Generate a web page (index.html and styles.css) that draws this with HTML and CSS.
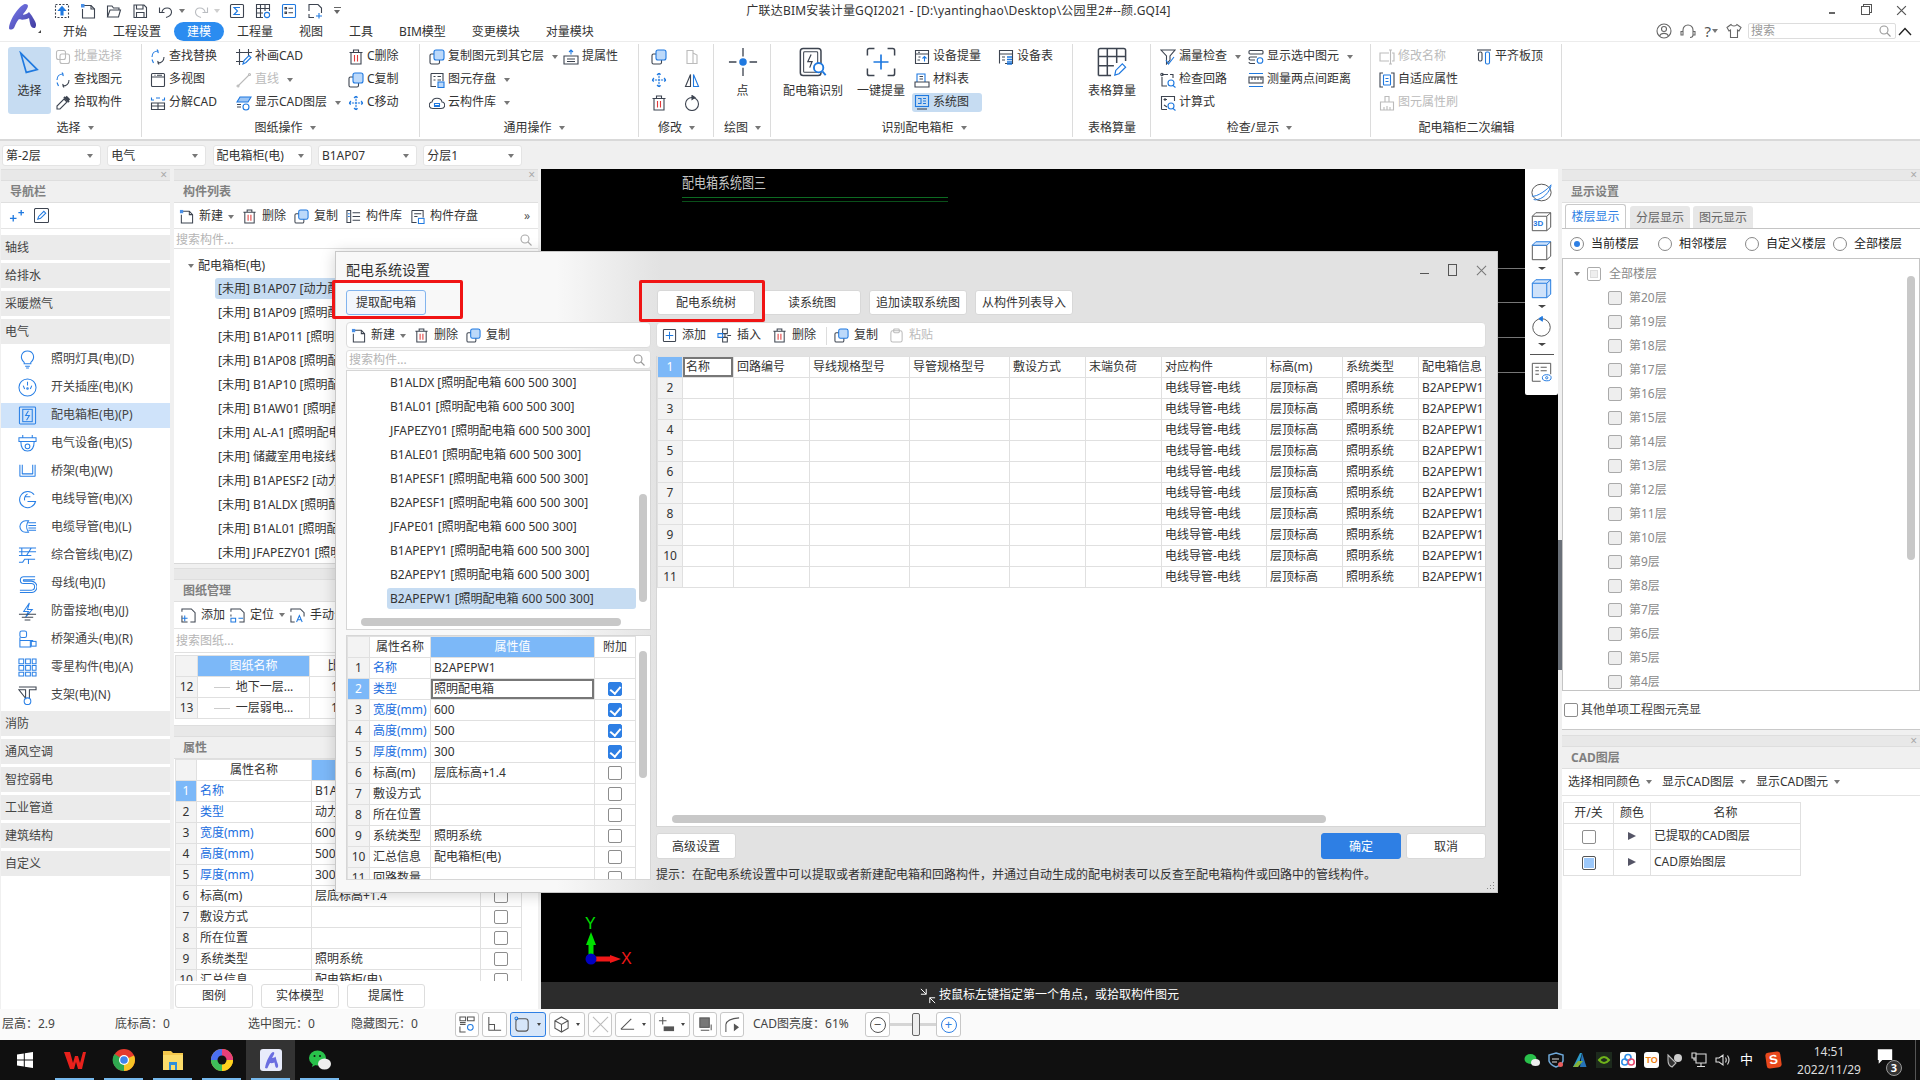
FILE: index.html
```html
<!DOCTYPE html>
<html lang="zh-CN">
<head>
<meta charset="utf-8">
<title>广联达BIM安装计量GQI2021</title>
<link rel="stylesheet" href="styles.css">
</head>
<body>
<svg class="defs" xmlns="http://www.w3.org/2000/svg">
<defs>
<linearGradient id="lg" x1="0" y1="0" x2="1" y2="1"><stop offset="0" stop-color="#7a7ef0"/><stop offset="1" stop-color="#3f3a9e"/></linearGradient>
<symbol id="q-up" viewBox="0 0 16 16"><rect x="1.5" y="1.5" width="13" height="13" stroke-dasharray="2 1.5"/><path d="M8 3.5 4.5 7.5H7V12H9V7.5H11.5Z" fill="#1f79e0" stroke="#1f79e0"/></symbol>
<symbol id="q-new" viewBox="0 0 16 16"><path d="M3 2.5H11L14.5 6V15H2.5V6"/><path d="M11 2.5V6H14.5"/><rect x="1" y="1" width="3.5" height="3.5" fill="#4a90e8" stroke="none"/></symbol>
<symbol id="q-open" viewBox="0 0 16 16"><path d="M1.5 14V3H6L7.5 5H13V7M1.5 14H12.5L14.5 7H4Z"/></symbol>
<symbol id="q-save" viewBox="0 0 16 16"><path d="M2 2H12L14.5 4.5V14.5H2Z"/><path d="M4.5 2V6H11V2M4.5 14.5V9.5H12V14.5"/></symbol>
<symbol id="q-undo" viewBox="0 0 16 16"><path d="M4 9C5 3.5 14 3.5 13.5 9.5C13 13 10 14 8 14.5"/><path d="M1.5 4.5V9.5H6.5"/></symbol>
<symbol id="q-redo" viewBox="0 0 16 16"><path d="M12 9C11 3.5 2 3.5 2.5 9.5C3 13 6 14 8 14.5"/><path d="M14.5 4.5V9.5H9.5"/></symbol>
<symbol id="q-sum" viewBox="0 0 16 16"><rect x="1.5" y="1.5" width="13" height="13" rx="1"/><path d="M11 4.5H5L8.5 8L5 11.5H11" stroke="#1f79e0"/></symbol>
<symbol id="q-tbl" viewBox="0 0 16 16"><path d="M8 14.5H1.5V1.5H14.5V8M1.5 5.5H14.5M1.5 10H8M5.5 1.5V14.5M10 1.5V8"/><circle cx="12" cy="12" r="2.6" stroke="#1f79e0"/></symbol>
<symbol id="q-list" viewBox="0 0 16 16"><rect x="1.5" y="1.5" width="13" height="13" rx="1" stroke="#1f79e0"/><path d="M4 4.5H5.5V6H4ZM4 9H5.5V10.5H4ZM7.5 5.2H12M7.5 9.7H12"/></symbol>
<symbol id="q-plus" viewBox="0 0 16 16"><path d="M2 8V1.5H11L14.5 5V10M2 11V14.5H7"/><path d="M9 13H15M12 10V15.5" stroke="#1f79e0"/></symbol>
<symbol id="nv-plus" viewBox="0 0 16 16" stroke="#1f79e0"><path d="M1 11H8M4.5 7.500V14.500M10 5H16M13 2V8" stroke-width="1.400"/></symbol>
<symbol id="nv-edit" viewBox="0 0 16 16"><rect x=".5" y=".5" width="15" height="15" rx="1.500"/><path d="M4 12 5 9 10.500 3.500 12.500 5.500 7 11Z" stroke="#1f79e0"/></symbol>
<symbol id="r-arrow" viewBox="0 0 24 32"><path d="M3 2 21 20 9 23Z" stroke="#1f79e0" stroke-width="1.8"/></symbol>
<symbol id="r-batch" viewBox="0 0 16 16"><rect x="1.5" y="1.5" width="9" height="9" rx="2"/><rect x="5" y="5" width="9.5" height="9.5" rx="2"/></symbol>
<symbol id="r-replace" viewBox="0 0 16 16"><path d="M2 8C2 4.5 4.5 2 8 2L7 .5M7 2 8.5 4" stroke="#1f79e0"/><path d="M14 8C14 11.5 11.5 14 8 14L9 15.5M9 14 7.5 12"/><path d="M2 10.5 3.5 14" stroke="#1f79e0"/></symbol>
<symbol id="r-drop" viewBox="0 0 16 16"><path d="M9 4 12 7 5 14H2V11Z"/><path d="M9 2 14 7M11 1.5 14.5 5" stroke-width="2"/></symbol>
<symbol id="r-patch" viewBox="0 0 16 16"><path d="M3.5 0V16M0 3.5H16M12.5 0V7M0 12.5H7"/><path d="M7 15 8 11.5 13 6.5 15 8.5 10 13.5Z" stroke="#1f79e0"/></symbol>
<symbol id="r-views" viewBox="0 0 16 16"><rect x="1.5" y="1.5" width="13" height="13" rx="1"/><path d="M1.5 5H14.5M4.5 3.2H5.5M7 3.2H12"/></symbol>
<symbol id="r-line" viewBox="0 0 16 16"><path d="M2 14 13 3"/><circle cx="13.5" cy="2.5" r="1"/><circle cx="2" cy="14" r="1"/></symbol>
<symbol id="r-layer" viewBox="0 0 16 16"><path d="M1 9.5H5M1 12H5"/><path d="M4 2 15 2 12 7H1Z" fill="#9cc5f5" stroke="#1f79e0"/><circle cx="10" cy="12" r="3" stroke="#1f79e0"/></symbol>
<symbol id="r-expl" viewBox="0 0 16 16"><path d="M1.5 8H14.5V14.5H1.5ZM8 8V14.5M1.5 11H14.5"/><path d="M4 5H1.5V2.5M12 5H14.5V2.5M6 3H10" stroke="#1f79e0"/></symbol>
<symbol id="r-del" viewBox="0 0 16 16"><path d="M3 3.5V15H13V3.5M1.5 3.5H14.5M5.5 3.5V1H10.5V3.5"/><path d="M6.5 6V12.5M9.5 6V12.5" stroke="#e23a3a"/></symbol>
<symbol id="r-copy" viewBox="0 0 16 16"><rect x="1" y="5" width="9.5" height="10" rx="1.5"/><rect x="5" y="1" width="10" height="10" rx="2" fill="#bcd9fa" stroke="#1f79e0"/></symbol>
<symbol id="r-move" viewBox="0 0 16 16" stroke="#1f79e0"><path d="M8 1V15M1 8H15M6 3 8 1 10 3M6 13 8 15 10 13M3 6 1 8 3 10M13 6 15 8 13 10" stroke-dasharray="2.2 .8"/></symbol>
<symbol id="r-prop" viewBox="0 0 16 16"><path d="M1 7H15V15H1ZM4 10H12M4 12.5H12"/><path d="M8 5.5V1M6 3 8 1 10 3" stroke="#1f79e0"/></symbol>
<symbol id="r-esave" viewBox="0 0 16 16"><path d="M2 1.5H14V9M7 14.5H2V1.5"/><path d="M4.5 4.5H6.5M8.5 4.5H12M4.5 8H6.5M8.5 8H12"/><rect x="9" y="10" width="6" height="5.5" fill="#bcd9fa" stroke="#1f79e0"/></symbol>
<symbol id="r-cloud" viewBox="0 0 16 16"><path d="M4 13.5C-1 13.5-.5 7 3 7C4 2 12 2 13 7C16.5 7 17 13.5 12 13.5Z"/><path d="M6 10.5H10M5.5 8.5H10.5V11.5H5.5Z" stroke="#1f79e0"/></symbol>
<symbol id="r-flip" viewBox="0 0 16 16"><path d="M3 1.5H9V14.5H3ZM9 4 13 6V14.5H9"/></symbol>
<symbol id="r-tri" viewBox="0 0 16 16"><path d="M6.5 2.5V14.5H1.5Z"/><path d="M9.5 2.5V14.5H14.5Z" stroke="#1f79e0"/></symbol>
<symbol id="r-rot" viewBox="0 0 16 16"><circle cx="8" cy="9" r="6.5"/><path d="M8 .5V4.5L11 2.5Z" fill="#3d4450"/></symbol>
<symbol id="b-pt" viewBox="0 0 32 32"><path d="M16 1V10M16 22V31M1 16H9M23 16H31" stroke-width="1.4"/><circle cx="16" cy="16" r="4" fill="#1f79e0" stroke="none"/></symbol>
<symbol id="b-box" viewBox="0 0 30 32"><rect x="1.5" y="1.5" width="22" height="29" rx="3" stroke-width="1.6"/><rect x="5" y="5" width="15" height="22" rx="1"/><path d="M13 8 9.5 15.5H14L11.5 22" stroke-width="1.3"/><circle cx="21" cy="22" r="5" fill="#fff" stroke="#1f79e0" stroke-width="2"/><path d="M25 26 28.5 30" stroke="#1f79e0" stroke-width="2"/></symbol>
<symbol id="b-plus" viewBox="0 0 32 32"><path d="M1.5 9V3.5Q1.5 1.5 3.5 1.5H9M23 1.5H28.5Q30.500 1.500 30.500 3.500V9M30.500 23V28.500Q30.500 30.500 28.500 30.500H23M9 30.500H3.500Q1.500 30.500 1.500 28.500V23" stroke-width="1.6"/><path d="M16 8V24M8 16H24" stroke="#1f79e0" stroke-width="1.8"/></symbol>
<symbol id="b-grid" viewBox="0 0 32 32"><path d="M1.500 30.500V3.500Q1.500 1.500 3.500 1.500H28.500Q30.500 1.500 30.500 3.500V15M1.500 10H30.500M1.500 20H18M11 1.500V30.500M21 1.500V17M1.500 30.500H15" stroke-width="1.6"/><path d="M19 30 20 25 27 18 30.500 21.500 23.500 28.500Z" stroke="#1f79e0" stroke-width="1.3"/></symbol>
<symbol id="r-dev" viewBox="0 0 16 16"><path d="M1.500 1.500H14.500V14.500H1.500ZM1.500 5H14.500M4 3.200H6M4.500 8H6.500M3.500 11H6"/><path d="M10.500 12.500V7.500M8.500 9.500 10.500 7.500 12.500 9.500" stroke="#1f79e0"/></symbol>
<symbol id="r-eq" viewBox="0 0 16 16"><path d="M1.500 14.500V1.500H14.500V14.500H7M1.500 5H14.500M4 8H7M4 11H7"/><path d="M9 8H14M9 10.500H14M9 13H14M9 15H14" stroke="#1f79e0" stroke-width="1.500"/></symbol>
<symbol id="r-book" viewBox="0 0 16 16"><path d="M3 10V2H11V10" stroke="#1f79e0"/><path d="M1 10H15V15H1ZM5.500 4.500H9M5.500 7H9"/></symbol>
<symbol id="r-sys" viewBox="0 0 16 16"><rect x="1.500" y=".5" width="13" height="11" stroke="#1f79e0"/><path d="M4 3.500H7V8.500H4M9 3.500H12M9 6H12M9 8.500H12" stroke="#1f79e0"/><path d="M3 14H13"/></symbol>
<symbol id="r-funnel" viewBox="0 0 16 16"><path d="M1 1H15L10 7V11L6.500 15V7Z"/><path d="M6 11 8.500 15 14 8" stroke="#1f79e0"/></symbol>
<symbol id="r-disp" viewBox="0 0 16 16"><rect x="1" y="1.500" width="14" height="3.500" rx="1"/><path d="M9 8H2.500Q1 8 1 9.500Q1 11 2.500 11H7M7 14.500H2.500Q1 14.500 1 13"/><circle cx="12" cy="11.500" r="2.800" stroke="#1f79e0"/></symbol>
<symbol id="r-loop" viewBox="0 0 16 16"><path d="M2 2.500H8M2 5V14H7M10 2.500H13V6"/><circle cx="2" cy="2.500" r="1.200"/><circle cx="11" cy="11" r="3" stroke="#1f79e0"/><path d="M13 13.500 15.500 15.500" stroke="#1f79e0"/></symbol>
<symbol id="r-rule" viewBox="0 0 16 16"><path d="M1 1.500H15M1 14.500H15" stroke="#1f79e0"/><rect x="1" y="5" width="14" height="6"/><path d="M4 5V8M7 5V8M10 5V8M13 5V8"/></symbol>
<symbol id="r-calc" viewBox="0 0 16 16"><path d="M1.500 14.500V1.500H14.500V6M1.500 14.500H7M3.500 4.500H7M5 3V6"/><path d="M4 10 7 12" /><circle cx="11" cy="11" r="3" stroke="#1f79e0"/><path d="M13 13.500 15.500 15.500" stroke="#1f79e0"/></symbol>
<symbol id="r-ren" viewBox="0 0 16 16"><path d="M10 1H13M10 15H13M11.500 1V15M10 4H1V12H10M13 4H15V12H13"/></symbol>
<symbol id="r-align" viewBox="0 0 16 16"><path d="M1 1H15"/><rect x="2.500" y="3" width="3.500" height="9" rx="1.500"/><rect x="9.500" y="3" width="4" height="12" rx="1.500" stroke="#1f79e0"/></symbol>
<symbol id="r-adapt" viewBox="0 0 16 16"><path d="M4 1H1V15H4M12 1H15V15H12"/><rect x="4.500" y="3" width="7" height="10" rx=".5" stroke="#1f79e0"/><path d="M6.500 6.500H9.500M6.500 9.500H9.500" stroke="#1f79e0"/></symbol>
<symbol id="r-brush" viewBox="0 0 16 16"><path d="M6 7V1.500H10V7M1.500 7H14.500V15H1.500ZM5 12V15M8 11V15M11 12V15"/></symbol>
<symbol id="n-bulb" viewBox="0 0 20 20"><path d="M6.500 13C1 8 4 1 10 1C16 1 19 8 13.500 13V14.500H6.500Z"/><path d="M7.500 17H12.500M8.500 19H11.500"/></symbol>
<symbol id="n-sock" viewBox="0 0 20 20"><circle cx="10" cy="10" r="9"/><path d="M10 4V8M5.500 8 7 11.500M14.500 8 13 11.500"/><circle cx="10" cy="11" r=".8"/></symbol>
<symbol id="n-box" viewBox="0 0 20 20"><rect x="1.500" y="1" width="17" height="18" rx="1"/><rect x="5" y="3.500" width="10" height="13"/><path d="M11 5 8 10H12L9 15"/></symbol>
<symbol id="n-dev" viewBox="0 0 20 20"><path d="M1 4H19V8H1ZM3 8C3 14 5 18 10 18C15 18 17 14 17 8M5 4V1M15 4V1"/><circle cx="10" cy="13" r="2.500"/></symbol>
<symbol id="n-tray" viewBox="0 0 20 20"><path d="M2 3V15H18V3M4.500 3V12.500H15.500V3" stroke-linejoin="bevel"/></symbol>
<symbol id="n-cond" viewBox="0 0 20 20"><path d="M17 5A8.500 8.500 0 1 0 18.500 12H10"/><path d="M13 7H7M10 4Q6 7 7 11"/></symbol>
<symbol id="n-cab" viewBox="0 0 20 20"><path d="M11 3H8A6 6 0 0 0 8 15H11Q7 9 11 3ZM11 5H19M11 8H19M11 10.500H19M11 13H19"/></symbol>
<symbol id="n-merge" viewBox="0 0 20 20"><path d="M1 2H19M1 6H19M1 10H14M4 2V10M14 2 9 10M1 17H5L7 14H18M11 14V19"/></symbol>
<symbol id="n-bus" viewBox="0 0 20 20"><path d="M18 3H6A3.500 3.500 0 0 0 6 10H14A3 3 0 0 1 14 17H2M18 6H6A1 1 0 0 0 6 7.500H14A5 5 0 0 1 14 19.500H2"/></symbol>
<symbol id="n-bolt" viewBox="0 0 20 20"><path d="M12 1 6 10H11L8 16 15 8H10Z"/><path d="M1 13H19M4 16H16M7 19H13" stroke="#3d4450"/></symbol>
<symbol id="n-conn" viewBox="0 0 20 20"><rect x="2" y="1" width="7" height="7" rx="2"/><path d="M2 8V18H14M2 11H16M13 11V18"/><rect x="14" y="12" width="5" height="5"/></symbol>
<symbol id="n-grid" viewBox="0 0 20 20"><path d="M1 1H6V6H1ZM8 1H13V6H8ZM15 1H19V6H15ZM1 8H6V13H1ZM8 8H13V13H8ZM15 8H19V13H15ZM1 15H6V19H1ZM8 15H13V19H8ZM15 15H19V19H15Z"/></symbol>
<symbol id="n-brk" viewBox="0 0 20 20"><path d="M1 1H19V4H12V13M8 13V4H1Z" stroke="#3d4450"/><circle cx="10" cy="16" r="3.500"/></symbol>
<symbol id="t-add" viewBox="0 0 16 16"><rect x="1.500" y="1.500" width="13" height="13" rx="1"/><path d="M8 4V12M4 8H12" stroke="#1f79e0"/></symbol>
<symbol id="t-ins" viewBox="0 0 16 16"><path d="M6 1H11V6H6ZM6 10H11V15H6ZM8.500 6V10M11 8H15" stroke="#3d4450"/><path d="M1 6H6V10H1Z" stroke="#1f79e0"/></symbol>
<symbol id="t-paste" viewBox="0 0 16 16"><rect x="2" y="3" width="12" height="12" rx="2"/><rect x="5" y="1" width="6" height="4" rx="1"/></symbol>
<symbol id="t-sheet" viewBox="0 0 16 16"><path d="M4 1H11L15 5V15H10M1 4V1H4M1 8V15H7"/><path d="M1 11H7M4 8V14" stroke="#1f79e0"/></symbol>
<symbol id="t-loc" viewBox="0 0 16 16"><path d="M4 1H11L15 5V15H10M1 4V1H4M1 7V9"/><path d="M1 11H6V15H1ZM9 11H14" stroke="#1f79e0"/></symbol>
<symbol id="t-man" viewBox="0 0 16 16"><path d="M4 1H11L15 5V9M1 4V1H4M1 8V15H5"/><path d="M7 15 10 8 13 15M8.500 12.500H11.500" stroke="#1f79e0"/></symbol>
<symbol id="t-lib" viewBox="0 0 16 16"><path d="M1 1.500H5V14.500H1ZM7 4H15M7 8H15M7 12H15"/><path d="M2 5H4M2 8H4" stroke="#1f79e0"/></symbol>
<symbol id="t-store" viewBox="0 0 16 16"><path d="M2 1.500H14V9M7 14.500H2V1.500M4.500 5H12M4.500 8H8"/><rect x="9" y="10" width="6" height="5.500" stroke="#1f79e0"/></symbol>
<symbol id="s-mag" viewBox="0 0 12 12"><circle cx="5" cy="5" r="4"/><path d="M8 8 11.500 11.500"/></symbol>
<symbol id="v-orb" viewBox="0 0 24 24"><ellipse cx="12" cy="12" rx="11" ry="9.500"/><path d="M1 16C6 18 20 8 23 3" stroke="#1f79e0"/><path d="M3 20C8 22 20 16 23 4" stroke="#1f79e0"/></symbol>
<symbol id="v-cube" viewBox="0 0 24 24"><path d="M1.500 6H18V22.500H1.500ZM1.500 6 5.500 2H22.500V18.500L18 22.500M18 6 22.500 2"/></symbol>
<symbol id="v-top" viewBox="0 0 24 24"><path d="M1.500 6H18V22.500H1.500Z"/><path d="M1.500 6 5.500 2H22.500L18 6Z" fill="#cfe2fa" stroke="#1f79e0"/><path d="M22.500 2V18.500L18 22.500"/></symbol>
<symbol id="v-rot" viewBox="0 0 24 24"><circle cx="12" cy="13" r="10"/><path d="M9 3 13 .5V6Z" fill="#1f79e0" stroke="#1f79e0"/></symbol>
<symbol id="v-eye" viewBox="0 0 24 24"><path d="M11 22H1.500V1.500H22.500V14M5 6H9M11 6H18M5 10H9M11 10H18M5 14H9"/><ellipse cx="18" cy="18" rx="5" ry="3.500" stroke="#1f79e0"/><circle cx="18" cy="18" r="1.300" stroke="#1f79e0"/></symbol>
<symbol id="c-find" viewBox="0 0 18 18"><path d="M1 1H7V5H1ZM1 7H7M1 9H7M9 1H16V5H9ZM1 11V17H7"/><circle cx="12" cy="12" r="3" stroke="#1f79e0"/></symbol>
<symbol id="c-corner" viewBox="0 0 18 18"><path d="M3 1V15H16M3 9H9V15"/></symbol>
<symbol id="c-round" viewBox="0 0 18 18"><rect x="2" y="3" width="13" height="13" rx="3"/><circle cx="2.500" cy="2.500" r="1.500" stroke="#1f79e0"/></symbol>
<symbol id="c-hex" viewBox="0 0 18 18"><path d="M9 1 16 5V13L9 17 2 13V5ZM2 5 9 9 16 5M9 9V17"/></symbol>
<symbol id="c-x" viewBox="0 0 18 18"><path d="M1 1 17 17M17 1 1 17"/></symbol>
<symbol id="c-ang" viewBox="0 0 18 18"><path d="M2 14 13 3M2 14H16"/></symbol>
<symbol id="c-pl" viewBox="0 0 18 18"><path d="M5 1V9M1 5H9"/><rect x="6" y="11" width="11" height="5" fill="#555" stroke="none"/></symbol>
<symbol id="c-dev" viewBox="0 0 18 18"><rect x="3" y="2" width="10" height="10" fill="#777"/><path d="M4 15H13M15 9V15"/></symbol>
<symbol id="c-arc" viewBox="0 0 18 18"><path d="M2 17V9Q3 3 16 2"/><path d="M11 9V15L15 12Z" fill="#555"/></symbol>
<symbol id="d-full" viewBox="0 0 18 18"><path d="M7 7 1 1M7 1V7H1M11 11 17 17M11 17V11H17"/></symbol>
</defs>
</svg>

<header class="top">
  <svg class="logo" viewBox="0 0 36 29"><path d="M1 24C2 14 12 1 17 0C22 0 20 4 16 9C13 12 18 11 21 8L24 12C26 16 30 20 27 24C22 25 22 18 21 14C18 16 12 16 11 15C8 18 7 22 6 24C4 26 1 26 1 24Z" fill="url(#lg)"/><path d="M33 26V29H30Z" fill="#444"/></svg>
  <div class="qa">
    <svg class="ic"><use href="#q-up"/></svg><svg class="ic"><use href="#q-new"/></svg><svg class="ic"><use href="#q-open"/></svg><svg class="ic"><use href="#q-save"/></svg>
    <span class="undo"><svg class="ic"><use href="#q-undo"/></svg><i class="dn"></i></span>
    <span class="undo dim"><svg class="ic"><use href="#q-redo"/></svg><i class="dn"></i></span>
    <svg class="ic"><use href="#q-sum"/></svg><svg class="ic"><use href="#q-tbl"/></svg><svg class="ic"><use href="#q-list"/></svg><svg class="ic"><use href="#q-plus"/></svg>
    <i class="qmore"></i>
  </div>
  <div class="apptitle">广联达BIM安装计量GQI2021 - [D:\yantinghao\Desktop\公园里2#--颜.GQI4]</div>
  <div class="winctl"><i class="w-min"></i><i class="w-rest"></i><svg class="w-x" viewBox="0 0 10 10"><path d="M1 1 9 9M9 1 1 9"/></svg></div>
  <nav class="tabs">
    <span>开始</span><span>工程设置</span><span class="on">建模</span><span>工程量</span><span>视图</span><span>工具</span><span>BIM模型</span><span>变更模块</span><span>对量模块</span>
  </nav>
  <div class="tools">
    <svg class="tool-ic" viewBox="0 0 16 16"><circle cx="8" cy="8" r="7"/><circle cx="8" cy="6" r="2.500"/><path d="M3.500 13C5 9.500 11 9.500 12.500 13"/></svg>
    <svg class="tool-ic" viewBox="0 0 16 16"><path d="M3 9V7A5 5 0 0 1 13 7V9M1 8.500H3V12H1ZM13 8.500H15V12H13ZM13 12Q13 14.500 10 14.500"/></svg>
    <span class="help">?<i class="dn"></i></span>
    <svg class="tool-ic shirt" viewBox="0 0 16 16"><path d="M5 1.500 1 4.500 3 8 4.500 7V14.500H11.500V7L13 8 15 4.500 11 1.500C10 3.500 6 3.500 5 1.500Z"/></svg>
    <div class="topsearch"><span>搜索</span><svg class="mag" viewBox="0 0 12 12"><use href="#s-mag"/></svg></div>
    <svg class="tool-up" viewBox="0 0 14 9"><path d="M1 8 7 1.500 13 8"/></svg>
  </div>
</header>

<section class="ribbon">
  <div class="grp g1">
    <div class="gb">
      <div class="sel-big"><svg class="sel-ar"><use href="#r-arrow"/></svg><span>选择</span></div>
      <div class="col">
        <div class="ri off"><svg class="ic"><use href="#r-batch"/></svg>批量选择</div>
        <div class="ri"><svg class="ic"><use href="#r-replace"/></svg>查找图元</div>
        <div class="ri"><svg class="ic"><use href="#r-drop"/></svg>拾取构件</div>
      </div>
    </div>
    <div class="gl">选择<i class="dn"></i></div>
  </div>
  <div class="grp g2">
    <div class="gb">
      <div class="col w86">
        <div class="ri"><svg class="ic"><use href="#r-replace"/></svg>查找替换</div>
        <div class="ri"><svg class="ic"><use href="#r-views"/></svg>多视图</div>
        <div class="ri"><svg class="ic"><use href="#r-expl"/></svg>分解CAD</div>
      </div>
      <div class="col w112">
        <div class="ri"><svg class="ic"><use href="#r-patch"/></svg>补画CAD</div>
        <div class="ri off"><svg class="ic"><use href="#r-line"/></svg>直线<i class="dn"></i></div>
        <div class="ri"><svg class="ic"><use href="#r-layer"/></svg>显示CAD图层<i class="dn"></i></div>
      </div>
      <div class="col">
        <div class="ri"><svg class="ic"><use href="#r-del"/></svg>C删除</div>
        <div class="ri"><svg class="ic"><use href="#r-copy"/></svg>C复制</div>
        <div class="ri"><svg class="ic"><use href="#r-move"/></svg>C移动</div>
      </div>
    </div>
    <div class="gl">图纸操作<i class="dn"></i></div>
  </div>
  <div class="grp g3">
    <div class="gb">
      <div class="col w134">
        <div class="ri"><svg class="ic"><use href="#r-copy"/></svg>复制图元到其它层<i class="dn"></i></div>
        <div class="ri"><svg class="ic"><use href="#r-esave"/></svg>图元存盘<i class="dn"></i></div>
        <div class="ri"><svg class="ic"><use href="#r-cloud"/></svg>云构件库<i class="dn"></i></div>
      </div>
      <div class="col"><div class="ri"><svg class="ic"><use href="#r-prop"/></svg>提属性</div></div>
    </div>
    <div class="gl">通用操作<i class="dn"></i></div>
  </div>
  <div class="grp g4">
    <div class="gb mini">
      <svg class="ic"><use href="#r-copy"/></svg><svg class="ic off"><use href="#r-flip"/></svg>
      <svg class="ic"><use href="#r-move"/></svg><svg class="ic"><use href="#r-tri"/></svg>
      <svg class="ic"><use href="#r-del"/></svg><svg class="ic"><use href="#r-rot"/></svg>
    </div>
    <div class="gl">修改<i class="dn"></i></div>
  </div>
  <div class="grp g5">
    <div class="gb"><div class="bigb wfull"><svg class="big"><use href="#b-pt"/></svg>点</div></div>
    <div class="gl">绘图<i class="dn"></i></div>
  </div>
  <div class="grp g6">
    <div class="gb">
      <div class="bigb w60"><svg class="big"><use href="#b-box"/></svg>配电箱识别</div>
      <div class="bigb w50"><svg class="big"><use href="#b-plus"/></svg>一键提量</div>
      <div class="col w84">
        <div class="ri"><svg class="ic"><use href="#r-dev"/></svg>设备提量</div>
        <div class="ri"><svg class="ic"><use href="#r-book"/></svg>材料表</div>
        <div class="ri act"><svg class="ic"><use href="#r-sys"/></svg>系统图</div>
      </div>
      <div class="col"><div class="ri"><svg class="ic"><use href="#r-eq"/></svg>设备表</div></div>
    </div>
    <div class="gl">识别配电箱柜<i class="dn"></i></div>
  </div>
  <div class="grp g7">
    <div class="gb"><div class="bigb wfull"><svg class="big"><use href="#b-grid"/></svg>表格算量</div></div>
    <div class="gl">表格算量</div>
  </div>
  <div class="grp g8">
    <div class="gb">
      <div class="col w88">
        <div class="ri"><svg class="ic"><use href="#r-funnel"/></svg>漏量检查<i class="dn"></i></div>
        <div class="ri"><svg class="ic"><use href="#r-loop"/></svg>检查回路</div>
        <div class="ri"><svg class="ic"><use href="#r-calc"/></svg>计算式</div>
      </div>
      <div class="col">
        <div class="ri"><svg class="ic"><use href="#r-disp"/></svg>显示选中图元<i class="dn"></i></div>
        <div class="ri"><svg class="ic"><use href="#r-rule"/></svg>测量两点间距离</div>
      </div>
    </div>
    <div class="gl">检查/显示<i class="dn"></i></div>
  </div>
  <div class="grp g9">
    <div class="gb">
      <div class="col w97">
        <div class="ri off"><svg class="ic"><use href="#r-ren"/></svg>修改名称</div>
        <div class="ri"><svg class="ic"><use href="#r-adapt"/></svg>自适应属性</div>
        <div class="ri off"><svg class="ic"><use href="#r-brush"/></svg>图元属性刷</div>
      </div>
      <div class="col"><div class="ri"><svg class="ic"><use href="#r-align"/></svg>平齐板顶</div></div>
    </div>
    <div class="gl">配电箱柜二次编辑</div>
  </div>
</section>

<section class="combos">
  <div class="combo">第-2层<i class="dn"></i></div>
  <div class="combo">电气<i class="dn"></i></div>
  <div class="combo">配电箱柜(电)<i class="dn"></i></div>
  <div class="combo">B1AP07<i class="dn"></i></div>
  <div class="combo">分层1<i class="dn"></i></div>
</section>

<main class="main">
  <aside class="nav panel">
    <div class="strip"><span class="px">×</span></div>
    <div class="phead">导航栏</div>
    <div class="tbar navbar"><svg class="ic"><use href="#nv-plus"/></svg><svg class="ic"><use href="#nv-edit"/></svg></div>
    <div class="navlist">
      <div class="cat">轴线</div><div class="cat">给排水</div><div class="cat">采暖燃气</div><div class="cat">电气</div>
      <div class="ni"><svg class="nic"><use href="#n-bulb"/></svg>照明灯具(电)(D)</div>
      <div class="ni"><svg class="nic"><use href="#n-sock"/></svg>开关插座(电)(K)</div>
      <div class="ni on"><svg class="nic"><use href="#n-box"/></svg>配电箱柜(电)(P)</div>
      <div class="ni"><svg class="nic"><use href="#n-dev"/></svg>电气设备(电)(S)</div>
      <div class="ni"><svg class="nic"><use href="#n-tray"/></svg>桥架(电)(W)</div>
      <div class="ni"><svg class="nic"><use href="#n-cond"/></svg>电线导管(电)(X)</div>
      <div class="ni"><svg class="nic"><use href="#n-cab"/></svg>电缆导管(电)(L)</div>
      <div class="ni"><svg class="nic"><use href="#n-merge"/></svg>综合管线(电)(Z)</div>
      <div class="ni"><svg class="nic"><use href="#n-bus"/></svg>母线(电)(I)</div>
      <div class="ni"><svg class="nic"><use href="#n-bolt"/></svg>防雷接地(电)(J)</div>
      <div class="ni"><svg class="nic"><use href="#n-conn"/></svg>桥架通头(电)(R)</div>
      <div class="ni"><svg class="nic"><use href="#n-grid"/></svg>零星构件(电)(A)</div>
      <div class="ni"><svg class="nic"><use href="#n-brk"/></svg>支架(电)(N)</div>
      <div class="cat">消防</div><div class="cat">通风空调</div><div class="cat">智控弱电</div><div class="cat">工业管道</div><div class="cat">建筑结构</div><div class="cat">自定义</div>
    </div>
  </aside>

  <section class="comp">
    <div class="panel compt">
      <div class="strip"><span class="px">×</span></div>
      <div class="phead">构件列表</div>
      <div class="tbar t1">
        <span class="tb"><svg class="ic"><use href="#q-new"/></svg>新建<i class="dn"></i></span>
        <span class="tb"><svg class="ic"><use href="#r-del"/></svg>删除</span>
        <span class="tb"><svg class="ic"><use href="#r-copy"/></svg>复制</span>
        <span class="tb"><svg class="ic"><use href="#t-lib"/></svg>构件库</span>
        <span class="tb"><svg class="ic"><use href="#t-store"/></svg>构件存盘</span>
        <span class="more">»</span>
      </div>
      <div class="search">搜索构件...<svg class="mag" viewBox="0 0 12 12"><use href="#s-mag"/></svg></div>
      <div class="tree">
        <div class="troot"><i class="dn"></i>配电箱柜(电)</div>
        <div class="tr on">[未用] B1AP07 [动力配电箱 600 500 300]</div>
        <div class="tr">[未用] B1AP09 [照明配电箱 600 500 300]</div>
        <div class="tr">[未用] B1AP011 [照明配电箱 600 500 300]</div>
        <div class="tr">[未用] B1AP08 [照明配电箱 600 500 300]</div>
        <div class="tr">[未用] B1AP10 [照明配电箱 600 500 300]</div>
        <div class="tr">[未用] B1AW01 [照明配电箱 600 500 300]</div>
        <div class="tr">[未用] AL-A1 [照明配电箱 600 500 300]</div>
        <div class="tr">[未用] 储藏室用电接线箱 [照明配电箱 600 500 300]</div>
        <div class="tr">[未用] B1APESF2 [动力配电箱 600 500 300]</div>
        <div class="tr">[未用] B1ALDX [照明配电箱 600 500 300]</div>
        <div class="tr">[未用] B1AL01 [照明配电箱 600 500 300]</div>
        <div class="tr">[未用] JFAPEZY01 [照明配电箱 600 500 300]</div>
      </div>
    </div>
    <div class="panel compm">
      <div class="strip"></div>
      <div class="phead">图纸管理</div>
      <div class="tbar t2">
        <span class="tb"><svg class="ic"><use href="#t-sheet"/></svg>添加</span>
        <span class="tb"><svg class="ic"><use href="#t-loc"/></svg>定位<i class="dn"></i></span>
        <span class="tb"><svg class="ic"><use href="#t-man"/></svg>手动分割</span>
      </div>
      <div class="search s2">搜索图纸...</div>
      <table class="grid gmgr">
        <colgroup><col class="c22"><col class="c112"><col class="c60"></colgroup>
        <tr><th></th><th class="hi">图纸名称</th><th class="ctr lbl">比例</th></tr>
        <tr><th>12</th><td class="ctr"><span class="dash"></span>地下一层...</td><td class="ctr">1:1</td></tr>
        <tr><th>13</th><td class="ctr"><span class="dash"></span>一层弱电...</td><td class="ctr">1:1</td></tr>
      </table>
    </div>
    <div class="panel compp">
      <div class="strip"></div>
      <div class="phead">属性</div>
      <div class="pwrap">
      <table class="grid gprop">
        <colgroup><col class="c21"><col class="c115"><col class="c169"><col class="c41"></colgroup>
        <tr><th></th><th class="ctr lbl">属性名称</th><th class="hi">属性值</th><th class="ctr lbl">附加</th></tr>
        <tr><th class="hi">1</th><td class="bl">名称</td><td>B1AP07</td><td></td></tr>
        <tr><th>2</th><td class="bl">类型</td><td>动力配电箱</td><td class="ctr"><i class="cb"></i></td></tr>
        <tr><th>3</th><td class="bl">宽度(mm)</td><td>600</td><td class="ctr"><i class="cb"></i></td></tr>
        <tr><th>4</th><td class="bl">高度(mm)</td><td>500</td><td class="ctr"><i class="cb"></i></td></tr>
        <tr><th>5</th><td class="bl">厚度(mm)</td><td>300</td><td class="ctr"><i class="cb"></i></td></tr>
        <tr><th>6</th><td>标高(m)</td><td>层底标高+1.4</td><td class="ctr"><i class="cb"></i></td></tr>
        <tr><th>7</th><td>敷设方式</td><td></td><td class="ctr"><i class="cb"></i></td></tr>
        <tr><th>8</th><td>所在位置</td><td></td><td class="ctr"><i class="cb"></i></td></tr>
        <tr><th>9</th><td>系统类型</td><td>照明系统</td><td class="ctr"><i class="cb"></i></td></tr>
        <tr><th>10</th><td>汇总信息</td><td>配电箱柜(电)</td><td class="ctr"><i class="cb"></i></td></tr>
      </table>
      </div>
      <div class="pbtns"><span class="btn">图例</span><span class="btn">实体模型</span><span class="btn">提属性</span></div>
    </div>
  </section>

  <section class="canvas">
    <div class="cad">
      <div class="cadtitle">配电箱系统图三</div>
      <i class="gline gl1"></i><i class="gline gl2"></i>
      <i class="hline h1"></i><i class="hline h2"></i><i class="hline h3"></i><i class="hline h4"></i>
      <svg class="axis" viewBox="0 0 50 50"><path d="M11 40V24" stroke="#00e000" stroke-width="5"/><path d="M6 26 11 13 16 26Z" fill="#00e000" stroke="none"/><path d="M11 40H32" stroke="#f01818" stroke-width="5"/><path d="M30 36 41 40 30 44Z" fill="#f01818" stroke="none"/><circle cx="11" cy="40" r="5.500" fill="#0000c0" stroke="none"/></svg>
      <span class="ax ay">Y</span><span class="ax axx">X</span>
      <div class="vbar">
        <svg class="vic"><use href="#v-orb"/></svg>
        <span class="v3d"><svg class="vic"><use href="#v-cube"/></svg><b>3D</b></span>
        <svg class="vic"><use href="#v-top"/></svg><i class="dn"></i>
        <svg class="vic blf"><use href="#v-cube"/></svg><i class="dn"></i>
        <svg class="vic"><use href="#v-rot"/></svg><i class="dn"></i>
        <span class="vsep"></span>
        <svg class="vic"><use href="#v-eye"/></svg>
      </div>
      <i class="grip"></i>
    </div>
    <div class="cmd"><svg class="cmdic"><use href="#d-full"/></svg>按鼠标左键指定第一个角点，或拾取构件图元</div>
  </section>

  <aside class="right">
    <div class="panel rtop">
      <div class="strip"><span class="px">×</span></div>
      <div class="phead">显示设置</div>
      <div class="rtabs"><span class="on">楼层显示</span><span>分层显示</span><span>图元显示</span></div>
      <div class="radios">
        <label class="rad w88b"><i class="rb on"></i>当前楼层</label>
        <label class="rad w87b"><i class="rb"></i>相邻楼层</label>
        <label class="rad w88b"><i class="rb"></i>自定义楼层</label>
        <label class="rad"><i class="rb"></i>全部楼层</label>
      </div>
      <div class="floors">
        <div class="fall"><i class="dn"></i><i class="fcb mid"></i>全部楼层</div>
        <div class="fr"><i class="fcb"></i>第20层</div><div class="fr"><i class="fcb"></i>第19层</div><div class="fr"><i class="fcb"></i>第18层</div><div class="fr"><i class="fcb"></i>第17层</div><div class="fr"><i class="fcb"></i>第16层</div><div class="fr"><i class="fcb"></i>第15层</div><div class="fr"><i class="fcb"></i>第14层</div><div class="fr"><i class="fcb"></i>第13层</div><div class="fr"><i class="fcb"></i>第12层</div><div class="fr"><i class="fcb"></i>第11层</div><div class="fr"><i class="fcb"></i>第10层</div><div class="fr"><i class="fcb"></i>第9层</div><div class="fr"><i class="fcb"></i>第8层</div><div class="fr"><i class="fcb"></i>第7层</div><div class="fr"><i class="fcb"></i>第6层</div><div class="fr"><i class="fcb"></i>第5层</div><div class="fr"><i class="fcb"></i>第4层</div>
        <i class="fscroll"></i>
      </div>
      <div class="others"><i class="cb"></i>其他单项工程图元亮显</div>
    </div>
    <div class="panel rbot">
      <div class="strip"><span class="px">×</span></div>
      <div class="phead">CAD图层</div>
      <div class="cadbar"><span>选择相同颜色<i class="dn"></i></span><span>显示CAD图层<i class="dn"></i></span><span>显示CAD图元<i class="dn"></i></span></div>
      <table class="grid gcad">
        <colgroup><col class="c50"><col class="c37"><col class="c150"></colgroup>
        <tr><td class="ctr">开/关</td><td class="ctr">颜色</td><td class="ctr">名称</td></tr>
        <tr class="tall"><td class="ctr"><i class="cb"></i></td><td class="ctr"><i class="play"></i></td><td>已提取的CAD图层</td></tr>
        <tr class="tall"><td class="ctr"><i class="cb fillb"></i></td><td class="ctr"><i class="play"></i></td><td>CAD原始图层</td></tr>
      </table>
    </div>
  </aside>
</main>

<footer class="status">
  <span class="st s1">层高：2.9</span><span class="st s2w">底标高：0</span><span class="st s3">选中图元：0</span><span class="st s4">隐藏图元：0</span>
  <span class="sb w24"><svg class="cic"><use href="#c-find"/></svg></span>
  <span class="sb w25"><svg class="cic"><use href="#c-corner"/></svg></span>
  <span class="sb w35 act"><svg class="cic"><use href="#c-round"/></svg><i class="dn"></i></span>
  <span class="sb w36"><svg class="cic"><use href="#c-hex"/></svg><i class="dn"></i></span>
  <span class="sb w24"><svg class="cic lt"><use href="#c-x"/></svg></span>
  <span class="sb w36"><svg class="cic"><use href="#c-ang"/></svg><i class="dn"></i></span>
  <span class="sb w35"><svg class="cic"><use href="#c-pl"/></svg><i class="dn"></i></span>
  <span class="sb w24"><svg class="cic"><use href="#c-dev"/></svg></span>
  <span class="sb w24"><svg class="cic"><use href="#c-arc"/></svg></span>
  <span class="lum">CAD图亮度：61%</span>
  <span class="sb w25 zm"><i class="circ">−</i></span>
  <span class="slider"><i></i></span>
  <span class="sb w25"><i class="circ blue">+</i></span>
</footer>

<footer class="taskbar">
  <span class="win"><svg class="winlogo" viewBox="0 0 16 16"><path d="M0 2.500 6.800 1.500V7.500H0ZM7.800 1.300 16 0V7.500H7.800ZM0 8.500H6.800V14.500L0 13.500ZM7.800 8.500H16V16L7.800 14.700Z" fill="#fff"/></svg></span>
  <span class="app"><svg class="appic" viewBox="0 0 24 24"><path d="M1 4H7L10 15 12 8H15L17 15 20 4H23L19 21H15L13 14 11 21H7Z" fill="#e8211c"/></svg></span>
  <span class="app"><svg class="appic" viewBox="0 0 24 24"><circle cx="12" cy="12" r="11" fill="#e53a2e"/><path d="M12 12 2.500 6A11 11 0 0 0 12 23Z" fill="#2fa84f"/><path d="M12 12V23A11 11 0 0 0 22 7.500Z" fill="#f6c325"/><circle cx="12" cy="12" r="5" fill="#fff"/><circle cx="12" cy="12" r="3.800" fill="#3f83ec"/></svg></span>
  <span class="app"><svg class="appic" viewBox="0 0 24 24"><path d="M2 3H10L12 5H22V22H2Z" fill="#f5c84c"/><path d="M2 7H22V22H2Z" fill="#fcdc6a"/><path d="M8 14H16V22H14V17H10V22H8Z" fill="#2f8fdc"/></svg></span>
  <span class="app"><svg class="appic" viewBox="0 0 24 24"><circle cx="12" cy="12" r="11" fill="#f4a623"/><path d="M12 12 12 1A11 11 0 0 1 23 12Z" fill="#e83f7a"/><path d="M12 12 23 12A11 11 0 0 1 12 23Z" fill="#ffd21f"/><path d="M12 12V23A11 11 0 0 1 1 12Z" fill="#3fbf5a"/><path d="M12 12H1A11 11 0 0 1 12 1Z" fill="#4a6ff0"/><circle cx="12" cy="12" r="4.500" fill="#111"/></svg></span>
  <span class="app active"><svg class="appic" viewBox="0 0 24 24"><rect x="1" y="1" width="22" height="22" rx="3" fill="#e8ecfb"/><path d="M6 20C7 13 12 4 14 4C17 4 14 8 13 10C15 10 16 9 16.500 8.500L18 14C19 16 20 19 18 20C16 20 16 16 15.500 14.500C13 15.500 11.500 15 11 15C9.500 17 9 20 8 20.500Z" fill="#6a6ee0"/></svg></span>
  <span class="app"><svg class="appic" viewBox="0 0 24 24"><ellipse cx="9.500" cy="10" rx="8.500" ry="7.500" fill="#29c14b"/><path d="M5 15 4 19 9 16Z" fill="#29c14b"/><ellipse cx="16.500" cy="16" rx="6.500" ry="5.500" fill="#eee"/><circle cx="6.500" cy="8" r="1" fill="#111"/><circle cx="12" cy="8" r="1" fill="#111"/></svg></span>
  <div class="tray">
    <svg class="tri" viewBox="0 0 16 16"><ellipse cx="6.500" cy="7" rx="6" ry="5" fill="#29c14b"/><ellipse cx="11.500" cy="10.500" rx="4.500" ry="3.500" fill="#eee"/></svg>
    <svg class="tri" viewBox="0 0 16 16"><path d="M8 1 15 3V9C14 12 11 14 8 15 5 14 2 12 1 9V3Z" fill="none" stroke="#6fa8d8" stroke-width="1.500"/><path d="M4 7H11M4 10H9" stroke="#ddd"/><circle cx="12.500" cy="12.500" r="2.500" fill="#e85d5d"/></svg>
    <svg class="tri" viewBox="0 0 16 16"><path d="M1 15 8 1H10L6 15Z" fill="#2d9ac9"/><path d="M8 15 10 1 14.500 15Z" fill="#2673b8"/><path d="M1 15 6 9H11L6 15Z" fill="#84b13a"/></svg>
    <svg class="tri" viewBox="0 0 16 16"><rect width="16" height="16" fill="#1d2a1d"/><path d="M3 8Q8 2 13 8Q8 14 3 8Z" fill="none" stroke="#6fb21a" stroke-width="2"/></svg>
    <svg class="tri" viewBox="0 0 16 16"><rect width="16" height="16" rx="2" fill="#fff"/><circle cx="8" cy="5.500" r="3" fill="none" stroke="#2f8fe8" stroke-width="1.600"/><circle cx="4.800" cy="10" r="3" fill="none" stroke="#2f8fe8" stroke-width="1.600"/><circle cx="11.200" cy="10" r="3" fill="none" stroke="#e84a6f" stroke-width="1.600"/></svg>
    <span class="totile">TO</span>
    <svg class="tri" viewBox="0 0 16 16"><path d="M1 3 9 11 5 15C2 14 1 11 1 8Z" fill="#333" stroke="#bbb"/><circle cx="11" cy="6" r="4" fill="#ccc"/></svg>
    <svg class="tri tray-ln" viewBox="0 0 16 16"><path d="M5 2H15V11H5ZM1 1H5V6H1ZM10 11V14M6 14.500H14M3 6V8H5"/></svg>
    <svg class="tri tray-ln" viewBox="0 0 16 16"><path d="M1 6H4L8 3V13L4 10H1ZM10.500 5.500Q12 8 10.500 10.500M12.500 3.500Q15.500 8 12.500 12.500"/></svg>
    <span class="zh">中</span>
    <span class="sogou">S</span>
  </div>
  <div class="clock"><span>14:51</span><span>2022/11/29</span></div>
  <div class="notif"><svg class="nf" viewBox="0 0 20 18"><path d="M2 1H18V13H7L3 17V13H2Z" fill="#fff"/></svg><b>3</b></div>
  <i class="showdesk"></i>
</footer>

<div class="dialog">
  <div class="dtop"><span class="dtitle">配电系统设置</span><div class="dctl"><i class="d-min"></i><i class="d-max"></i><svg class="d-x" viewBox="0 0 12 12"><path d="M1 1 11 11M11 1 1 11"/></svg></div></div>
  <div class="dbody">
    <div class="dleft">
      <div class="dbtns"><span class="dbtn prim">提取配电箱</span></div>
      <div class="dtb">
        <span class="tb"><svg class="ic"><use href="#q-new"/></svg>新建<i class="dn"></i></span>
        <span class="tb"><svg class="ic"><use href="#r-del"/></svg>删除</span>
        <span class="tb"><svg class="ic"><use href="#r-copy"/></svg>复制</span>
      </div>
      <div class="dsearch">搜索构件...<svg class="mag" viewBox="0 0 12 12"><use href="#s-mag"/></svg></div>
      <div class="dlist">
        <div class="dr">B1ALDX [照明配电箱 600 500 300]</div>
        <div class="dr">B1AL01 [照明配电箱 600 500 300]</div>
        <div class="dr">JFAPEZY01 [照明配电箱 600 500 300]</div>
        <div class="dr">B1ALE01 [照明配电箱 600 500 300]</div>
        <div class="dr">B1APESF1 [照明配电箱 600 500 300]</div>
        <div class="dr">B2APESF1 [照明配电箱 600 500 300]</div>
        <div class="dr">JFAPE01 [照明配电箱 600 500 300]</div>
        <div class="dr">B1APEPY1 [照明配电箱 600 500 300]</div>
        <div class="dr">B2APEPY1 [照明配电箱 600 500 300]</div>
        <div class="dr on">B2APEPW1 [照明配电箱 600 500 300]</div>
        <i class="sv"></i><i class="sh"></i>
      </div>
      <div class="dprop">
        <table class="grid dp">
          <colgroup><col class="c22"><col class="c61"><col class="c164"><col class="c41"></colgroup>
          <tr><th></th><th class="ctr lbl">属性名称</th><th class="hi">属性值</th><th class="ctr lbl">附加</th></tr>
          <tr><th>1</th><td class="bl">名称</td><td>B2APEPW1</td><td></td></tr>
          <tr><th class="hi">2</th><td class="bl">类型</td><td class="cur">照明配电箱</td><td class="ctr"><i class="cb ck"></i></td></tr>
          <tr><th>3</th><td class="bl">宽度(mm)</td><td>600</td><td class="ctr"><i class="cb ck"></i></td></tr>
          <tr><th>4</th><td class="bl">高度(mm)</td><td>500</td><td class="ctr"><i class="cb ck"></i></td></tr>
          <tr><th>5</th><td class="bl">厚度(mm)</td><td>300</td><td class="ctr"><i class="cb ck"></i></td></tr>
          <tr><th>6</th><td>标高(m)</td><td>层底标高+1.4</td><td class="ctr"><i class="cb"></i></td></tr>
          <tr><th>7</th><td>敷设方式</td><td></td><td class="ctr"><i class="cb"></i></td></tr>
          <tr><th>8</th><td>所在位置</td><td></td><td class="ctr"><i class="cb"></i></td></tr>
          <tr><th>9</th><td>系统类型</td><td>照明系统</td><td class="ctr"><i class="cb"></i></td></tr>
          <tr><th>10</th><td>汇总信息</td><td>配电箱柜(电)</td><td class="ctr"><i class="cb"></i></td></tr>
          <tr><th>11</th><td>回路数量</td><td></td><td class="ctr"><i class="cb"></i></td></tr>
        </table>
        <i class="sv2"></i>
      </div>
    </div>
    <div class="dright">
      <div class="dbtns gap8"><span class="dbtn">配电系统树</span><span class="dbtn">读系统图</span><span class="dbtn">追加读取系统图</span><span class="dbtn">从构件列表导入</span></div>
      <div class="dtb tight">
        <span class="tb"><svg class="ic"><use href="#t-add"/></svg>添加</span>
        <span class="tb"><svg class="ic"><use href="#t-ins"/></svg>插入</span>
        <span class="tb"><svg class="ic"><use href="#r-del"/></svg>删除</span>
        <span class="tbsep"></span>
        <span class="tb"><svg class="ic"><use href="#r-copy"/></svg>复制</span>
        <span class="tb off"><svg class="ic"><use href="#t-paste"/></svg>粘贴</span>
      </div>
      <div class="dsheet">
        <table class="grid ds">
          <colgroup><col class="c25"><col class="c51"><col class="c76"><col class="c100"><col class="c100"><col class="c76"><col class="c76"><col class="c105"><col class="c76"><col class="c76"><col class="c68"></colgroup>
          <tr><th class="hi">1</th><td class="cur">名称</td><td>回路编号</td><td>导线规格型号</td><td>导管规格型号</td><td>敷设方式</td><td>末端负荷</td><td>对应构件</td><td>标高(m)</td><td>系统类型</td><td>配电箱信息</td></tr>
          <tr><th>2</th><td></td><td></td><td></td><td></td><td></td><td></td><td>电线导管-电线</td><td>层顶标高</td><td>照明系统</td><td>B2APEPW1</td></tr>
          <tr><th>3</th><td></td><td></td><td></td><td></td><td></td><td></td><td>电线导管-电线</td><td>层顶标高</td><td>照明系统</td><td>B2APEPW1</td></tr>
          <tr><th>4</th><td></td><td></td><td></td><td></td><td></td><td></td><td>电线导管-电线</td><td>层顶标高</td><td>照明系统</td><td>B2APEPW1</td></tr>
          <tr><th>5</th><td></td><td></td><td></td><td></td><td></td><td></td><td>电线导管-电线</td><td>层顶标高</td><td>照明系统</td><td>B2APEPW1</td></tr>
          <tr><th>6</th><td></td><td></td><td></td><td></td><td></td><td></td><td>电线导管-电线</td><td>层顶标高</td><td>照明系统</td><td>B2APEPW1</td></tr>
          <tr><th>7</th><td></td><td></td><td></td><td></td><td></td><td></td><td>电线导管-电线</td><td>层顶标高</td><td>照明系统</td><td>B2APEPW1</td></tr>
          <tr><th>8</th><td></td><td></td><td></td><td></td><td></td><td></td><td>电线导管-电线</td><td>层顶标高</td><td>照明系统</td><td>B2APEPW1</td></tr>
          <tr><th>9</th><td></td><td></td><td></td><td></td><td></td><td></td><td>电线导管-电线</td><td>层顶标高</td><td>照明系统</td><td>B2APEPW1</td></tr>
          <tr><th>10</th><td></td><td></td><td></td><td></td><td></td><td></td><td>电线导管-电线</td><td>层顶标高</td><td>照明系统</td><td>B2APEPW1</td></tr>
          <tr><th>11</th><td></td><td></td><td></td><td></td><td></td><td></td><td>电线导管-电线</td><td>层顶标高</td><td>照明系统</td><td>B2APEPW1</td></tr>
        </table>
        <i class="sh2"></i>
      </div>
      <div class="dfoot"><span class="dbtn">高级设置</span><span class="fill"></span><span class="dbtn ok">确定</span><span class="dbtn">取消</span></div>
      <div class="hint">提示：在配电系统设置中可以提取或者新建配电箱和回路构件，并通过自动生成的配电树表可以反查至配电箱构件或回路中的管线构件。</div>
    </div>
  </div>
  <i class="red r1"></i><i class="red r2"></i>
  <svg class="resize" viewBox="0 0 9 9"><path d="M7 1H8V2H7ZM4 4H5V5H4ZM7 4H8V5H7ZM1 7H2V8H1ZM4 7H5V8H4ZM7 7H8V8H7Z" fill="#888" stroke="none"/></svg>
</div>
</body>
</html>
```
FILE: styles.css
```css
*{box-sizing:border-box}
html,body{margin:0;padding:0}
body{width:1920px;height:1080px;overflow:hidden;position:relative;display:flex;flex-direction:column;background:#f0f0f0;color:#333;font:12px/1.2 "Noto Sans","Noto Sans CJK SC",sans-serif}
i{font-style:normal;display:inline-block}
.defs{width:0;height:0;position:absolute}
svg{fill:none;stroke:#3d4450;stroke-width:1.1;flex:none}
.dn{width:0;height:0;border:3px solid transparent;border-top:4px solid #777;border-bottom:0;flex:none}

/* top */
.top{height:41px;flex:none;background:#fff;display:grid;grid-template-columns:50px 696px 425px 1fr;grid-template-rows:21px 20px}
.logo{grid-row:1/3;width:36px;height:29px;margin:4px 0 0 8px;stroke:none}
.qa{display:flex;align-items:center;gap:10px;padding-left:4px}
.qa .ic{width:16px;height:16px}
.undo{display:flex;align-items:center;gap:4px}
.undo .dn{margin-left:1px}
.undo.dim{margin:0 -1px 0 -2px;opacity:.35}
.qmore{width:7px;height:7px;margin-left:1px;border-top:1px solid #666;position:relative}
.qmore::after{content:"";position:absolute;left:0;top:2px;border:3.500px solid transparent;border-top:4px solid #666;border-bottom:0}
.apptitle{font-size:12px;text-align:center;line-height:22px;white-space:nowrap;color:#333;letter-spacing:.2px}
.winctl{display:flex;justify-content:flex-end;align-items:center;gap:26px;padding-right:13px;color:#555}
.w-min{width:6px;height:2px;background:#666;margin-top:4px}
.w-rest{width:9px;height:9px;border:1px solid #555;box-shadow:2px -2px 0 -1px #fff,2px -2px 0 0 #555}
.w-x{width:11px;height:11px;stroke:#555}
.tabs{grid-column:2/4;display:flex;align-items:center;height:20px}
.tabs span{padding:0 13px;line-height:19px;height:19px;white-space:nowrap}
.tabs .on{background:#2b8cf0;color:#fff;border-radius:10px;width:50px;padding:0;text-align:center}
.tools{display:flex;align-items:center;justify-content:flex-end;gap:0;padding-right:8px}
.tool-ic{width:16px;height:16px;stroke:#666;margin-right:8px}
.tool-ic.shirt{margin-right:6px}
.help{display:flex;align-items:center;gap:1px;font-size:15px;color:#555;margin-right:8px}
.topsearch{width:148px;height:16px;border:1px solid #ddd;border-radius:2px;padding:0 4px 0 2px;display:flex;justify-content:space-between;align-items:center;color:#999;font-size:12px}
.mag{width:12px;height:12px;stroke:#999}
.tool-up{width:14px;height:9px;margin-left:2px;stroke:#222;stroke-width:1.400}

/* ribbon */
.ribbon{height:100px;flex:none;display:flex;background:#fff;border-top:1px solid #ececec;border-bottom:2px solid #d9d9d9}
.grp{position:relative;display:flex;flex-direction:column;flex:none;padding-top:3px}
.grp::after{content:"";position:absolute;right:0;top:2px;bottom:2px;width:1px;background:#dcdcdc}
.gb{height:71px;display:flex;flex:none}
.gl{height:20px;margin-top:2px;display:flex;align-items:center;justify-content:center;gap:7px;white-space:nowrap}
.g1{width:142px;padding-left:8px}
.g2{width:278px;padding-left:8px}
.g3{width:219px;padding-left:9px}
.g4{width:75px}
.g5{width:57px}
.g6{width:302px;padding-left:12px}
.g6 .gl{margin-right:8px}
.g7{width:78px}
.g8{width:220px;padding-left:9px}
.g8 .gl{margin-right:12px}
.g9{width:191px;padding-left:8px}
.g9 .gl{margin-right:8px}
.sel-big{width:43px;height:67px;margin:2px 4px 0 0;background:#c6dcf2;border-radius:3px;display:flex;flex-direction:column;align-items:center;text-align:center}
.sel-ar{width:22px;height:30px;margin:4px 0 0 -2px;display:block}
.sel-big span{margin-top:3px}
.col{display:flex;flex-direction:column;flex:none}
.w84{width:84px}.w86{width:86px}.w88{width:88px}.w97{width:97px}.w112{width:112px}.w134{width:134px}
.ri{height:23px;display:flex;align-items:center;gap:3px;white-space:nowrap}
.ri .dn{margin-left:5px}
.ri .ic{width:16px;height:16px}
.ri.off{color:#bbb}
.ri.off svg,.ic.off{stroke:#bbb}
.ri.act{background:#c6dcf2;border-radius:3px;margin:2px 0 2px -2px;height:19px;width:70px;padding-left:2px}
.mini{display:grid;grid-template-columns:16px 16px;column-gap:17px;grid-auto-rows:23px;align-items:center;padding-left:12px}
.mini .ic{width:16px;height:16px}
.bigb{display:flex;flex-direction:column;align-items:center;white-space:nowrap;flex:none;padding-top:2px}
.big{width:30px;height:30px;margin-bottom:7px;display:block}
.wfull{width:100%}
.w60{width:60px}
.w50{width:50px;margin:0 8px 0 13px}

/* combos */
.combos{height:28px;flex:none;display:flex;gap:6.300px;align-items:center;padding:1px 0 0 2px;background:#f0f0f0}
.combo{width:99px;height:21px;background:#fff;border:1px solid #e4e4e4;border-radius:3px;display:flex;align-items:center;justify-content:space-between;padding:1px 7px 0 3px;white-space:nowrap}

/* main */
.main{height:840px;flex:none;display:flex;align-items:stretch;overflow:hidden}
.panel{display:flex;flex-direction:column;background:#fff;flex:none;overflow:hidden}
.strip{height:12px;flex:none;background:#e8e8e8;position:relative;border:1px solid #dedede;border-width:1px 0}
.px{position:absolute;right:3px;top:0;color:#aaa;font-size:12px;line-height:10px}
.phead{height:22px;flex:none;background:#f0f0f0;color:#808080;font-weight:700;display:flex;align-items:center;padding:1px 0 0 9px;border-bottom:1px solid #dfdfdf}
.nav{width:169px;margin-left:1px}
.tbar{height:26px;flex:none;display:flex;align-items:center;padding-left:5px;gap:6px;background:#fff;border-bottom:1px solid #e4e4e4;overflow:hidden}
.tbar .ic,.dtb .ic{width:15px;height:15px}
.navbar{padding-left:8px;gap:10px}
.t1{padding-top:2px}
.navlist{padding-top:6px;display:flex;flex-direction:column;background:#fff;flex:1}
.cat{height:25px;margin-bottom:3px;background:#ebebeb;line-height:25px;padding-left:4px;color:#444;flex:none}
.ni{height:25px;margin-bottom:3px;display:flex;align-items:center;color:#444;padding-left:17px;flex:none;gap:14px}
.ni.on{background:#cfe3fa}
.nic{width:19px;height:19px;stroke:#2a80e6;stroke-width:1.100}
.comp{width:364px;margin-left:4px;display:flex;flex-direction:column;background:#f0f0f0;flex:none}
.compt{height:395px;border-bottom:1px solid #d8d8d8}
.compm{height:157px;margin-top:4px}
.compp{flex:1}
.tb{display:flex;align-items:center;gap:5px;white-space:nowrap;margin-right:2px}
.more{margin-left:auto;padding-right:8px;color:#555}
.search{height:20px;flex:none;color:#b5b5b5;display:flex;align-items:center;justify-content:space-between;padding:3px 6px 0 2px;border-bottom:1px solid #e0e0e0}
.search .mag{stroke:#aaa}
.tree{flex:1;padding-top:5px;overflow:hidden}
.troot{height:24px;display:flex;align-items:center;padding-left:14px;gap:4px;white-space:nowrap;margin-bottom:-3px}
.tr{height:21px;margin:3px 0 0 41px;padding-left:3px;line-height:21px;white-space:nowrap;border-radius:3px 0 0 3px}
.tr.on{background:#c6dcf2}
.t2{height:27px;padding-left:7px;gap:3px;border-bottom:1px solid #e4e4e4}
.s2{height:24px;margin-bottom:2px;padding-top:1px}

/* grids */
.grid{border-collapse:collapse;table-layout:fixed;background:#fff}
.grid th,.grid td{height:21px;padding:0 3px;border:1px solid #e0e0e0;font-weight:400;text-align:left;white-space:nowrap;overflow:hidden;color:#333}
.grid th{background:#f3f3f3;text-align:center;padding:0}
.grid th.hi{background:#7cb8f8;color:#fff;text-align:center}
.grid .ctr{text-align:center}
.grid .lbl{background:#fff}
.grid .bl{color:#1a6ee0}
.grid .cur{box-shadow:inset 0 0 0 2px #777}
.c21{width:21px}.c22{width:22px}.c25{width:25px}.c37{width:37px}.c41{width:41px}.c50{width:50px}.c51{width:51px}.c60{width:60px}.c61{width:61px}.c68{width:68px}.c76{width:76px}.c100{width:100px}.c105{width:105px}.c112{width:112px}.c115{width:115px}.c150{width:150px}.c164{width:164px}.c169{width:169px}
.gmgr{width:194px;margin-left:1px}
.dash{display:inline-block;width:16px;height:1px;background:#ccc;vertical-align:middle;margin-right:6px}
.pwrap{height:222px;overflow:hidden;flex:none;padding-left:1px}
.gprop{width:346px}
.cb{width:14px;height:14px;border:1px solid #8d8d8d;border-radius:2px;background:#fff;vertical-align:middle;position:relative}
.cb.ck{background:#2e7fe4;border-color:#2e7fe4}
.cb.ck::after{content:"";position:absolute;left:3px;top:1px;width:5px;height:8px;border:solid #fff;border-width:0 2px 2px 0;transform:rotate(40deg)}
.cb.fillb{border-color:#555;background:#9cc8fa;box-shadow:inset 0 0 0 1px #fff}
.pbtns{display:flex;gap:8px;padding:3px 0 0 1px}
.btn{width:78px;height:24px;border:1px solid #ddd;border-radius:3px;background:#fff;display:flex;align-items:center;justify-content:center}

/* canvas */
.canvas{width:1017px;margin-left:3px;display:flex;flex-direction:column;flex:none}
.cad{height:813px;flex:none;background:#000;position:relative}
.cadtitle{position:absolute;left:141px;top:4px;color:#c4c4c4;font:15px/20px "Liberation Serif","Noto Sans CJK SC",serif;transform:scaleX(.8);transform-origin:left;white-space:nowrap}
.gline{position:absolute;left:141px;width:266px;height:1px;background:#0d6b22}
.gl1{top:28px}.gl2{top:32px;background:#0a4f1a}
.hline{position:absolute;left:957px;width:27px;height:1px;background:#777}
.h1{top:99px}.h2{top:133px}.h3{top:168px}.h4{top:203px}
.axis{position:absolute;left:39px;top:750px;width:50px;height:50px}
.ax{position:absolute;font:16px/16px "Liberation Sans",sans-serif}
.ay{left:44px;top:747px;color:#00e000}
.axx{left:80px;top:782px;color:#f01818}
.vbar{position:absolute;left:984px;top:0;width:33px;height:226px;background:#fff;border-radius:0 0 2px 2px;display:flex;flex-direction:column;align-items:center;padding-top:13px}
.vic{width:21px;height:21px;stroke:#555;flex:none;margin-bottom:8px;display:block}
.v3d{position:relative;height:29px;flex:none}
.v3d b{position:absolute;left:2px;top:8px;color:#1f79e0;font:700 8px/10px "Liberation Sans",sans-serif}
.vbar .dn{border-top-color:#444;border-width:3px 4px 0 4px;margin:-2px 0 8px}
.vic.blf{stroke:#1f79e0;fill:#cfe2fa}
.vsep{width:24px;height:1px;background:#555;margin:0 0 7px;flex:none}
.grip{position:absolute;right:-4px;top:371px;width:4px;height:130px;background:#6a7078}
.cmd{height:27px;background:#2c2c2c;color:#fff;display:flex;align-items:center;padding-left:379px;gap:3px;white-space:nowrap;font-size:12px}
.cmdic{width:16px;height:16px;stroke:#fff}

/* right */
.right{width:358px;margin-left:4px;display:flex;flex-direction:column;flex:none;position:relative}
.rtop{height:561px;border-bottom:1px solid #c9c9c9}
.rbot{flex:1;margin-top:5px}
.rtabs{height:26px;display:flex;align-items:flex-end;gap:3px;padding-left:3px;border-bottom:1px solid #c4c4c4;flex:none}
.rtabs span{width:60px;height:22px;background:#e7e7e7;color:#666;border-radius:3px 3px 0 0;display:flex;align-items:center;justify-content:center;padding-top:2px}
.rtabs .on{background:#fff;color:#2e7fe4;border:1px solid #c9c9c9;border-bottom:0;height:24px;width:61px;margin-right:1px}
.radios{height:30px;display:flex;align-items:center;padding:1px 0 0 8px;flex:none;border-bottom:1px solid #c4c4c4}
.rad{display:flex;align-items:center;gap:7px;white-space:nowrap;color:#222}
.w88b{width:88px}.w87b{width:87px}
.rb{width:14px;height:14px;border:1px solid #888;border-radius:50%;position:relative;background:#fff;flex:none}
.rb.on::after{content:"";position:absolute;left:3px;top:3px;width:6px;height:6px;border-radius:50%;background:#2e7fe4}
.floors{flex:1;position:relative;overflow:hidden;border:solid #c4c4c4;border-width:0 1px 1px}
.fall{height:24px;margin-top:3px;display:flex;align-items:center;padding-left:11px;color:#888}
.fall .dn{margin-right:7px}
.fall .fcb{margin-right:8px}
.fr{height:24px;display:flex;align-items:center;padding-left:45px;color:#8a8a8a}
.fcb{width:14px;height:14px;border:1px solid #aaa;border-radius:2px;background:#eee;margin-right:7px;flex:none;position:relative}
.fcb.mid{background:#fff}
.fcb.mid::after{content:"";position:absolute;inset:2px;background:#eee;border:1px solid #ddd}
.fscroll{position:absolute;right:4px;top:17px;width:8px;height:284px;background:#c8c8c8;border-radius:4px}
.others{height:38px;flex:none;display:flex;align-items:center;gap:3px;padding-left:2px;color:#444}
.cadbar{height:27px;flex:none;display:flex;align-items:center;gap:10px;padding-left:6px;border-bottom:1px solid #e4e4e4;white-space:nowrap}
.cadbar span{display:flex;align-items:center;gap:6px}
.gcad{width:237px;margin:6px 0 0 1px}
.gcad .tall td{height:26px}
.play{width:0;height:0;border:4px solid transparent;border-left:8px solid #556;border-right:0}

/* status */
.status{height:31px;flex:none;background:#fafafa;display:flex;align-items:center;white-space:nowrap;color:#444}
.st{flex:none}
.s1{width:115px;padding-left:2px}
.s2w{width:133px}.s3{width:103px}.s4{width:104px}
.sb{height:25px;border:1px solid #c8c8c8;border-radius:3px;background:#fff;display:flex;align-items:center;justify-content:center;gap:3px;flex:none;margin-right:3px}
.sb .dn{border-width:3px 2.500px 0;border-top-color:#444}
.sb.act{background:#d6e6fa;border-color:#2e7fe4}
.w24{width:24px}.w25{width:25px}
.w35,.w36{width:36px;justify-content:flex-start;padding-left:3px;gap:6px}
.cic{width:17px;height:17px;stroke:#555}
.cic.lt{stroke:#bbb}
.lum{margin:0 14px 0 6px;width:98px;flex:none}
.zm{margin-right:0}
.circ{width:16px;height:16px;border:1px solid #555;border-radius:50%;text-align:center;line-height:13px;font-size:13px;color:#555}
.circ.blue{border-color:#2e7fe4;color:#2e7fe4}
.slider{width:46px;height:3px;background:#d5d5d5;position:relative;flex:none}
.slider i{position:absolute;left:22px;top:-10px;width:8px;height:23px;background:#eee;border:1px solid #666;border-radius:2px}

/* taskbar */
.taskbar{height:40px;flex:none;background:#101010;display:flex;align-items:center;position:relative}
.win{width:50px;display:flex;justify-content:center;flex:none}
.winlogo{width:16px;height:16px;stroke:none}
.app{width:49px;height:40px;display:flex;align-items:center;justify-content:center;position:relative;flex:none}
.app::after{content:"";position:absolute;left:5px;right:5px;bottom:0;height:2px;background:#76b9ed}
.app.active{background:#333}
.appic{width:24px;height:24px;stroke:none}
.tray{margin-left:auto;display:flex;align-items:center;flex:none;width:269px;height:40px}
.tri{width:16px;height:16px;margin:0 4px;stroke:none}
.tray-ln{stroke:#ddd}
.totile{width:16px;height:16px;margin:0 4px;background:#fff;border-radius:3px;color:#f08010;font:700 9px/16px "Liberation Sans",sans-serif;text-align:center}
.zh{width:24px;text-align:center;color:#fff;font-size:13px}
.sogou{width:16px;height:16px;margin:0 8px;background:#e8481c;color:#fff;border-radius:3px;font:700 13px/16px "Liberation Sans",sans-serif;text-align:center;transform:rotate(-8deg)}
.clock{width:80px;display:flex;flex-direction:column;align-items:center;color:#ddd;gap:3px;flex:none;line-height:15px}
.notif{width:32px;height:30px;position:relative;flex:none}
.nf{width:18px;height:17px;position:absolute;left:7px;top:3px;stroke:none}
.notif b{position:absolute;left:17px;top:15px;width:16px;height:16px;border-radius:50%;background:#333;border:1px solid #999;color:#fff;text-align:center;line-height:14px;font-size:11px}
.showdesk{width:1px;height:40px;background:#555;margin:0 4px 0 14px}

/* dialog */
.dialog{position:absolute;left:335px;top:251px;width:1163px;height:642px;background:linear-gradient(90deg,#f8f8f8 0,#f8f8f8 19%,#e2e2e2 28%);border:1px solid #c8c8c8;box-shadow:0 2px 14px rgba(0,0,0,.18);padding:0 11px 0 10px;display:flex;flex-direction:column}
.dtop{height:38px;flex:none;display:flex;justify-content:space-between;align-items:center;padding-bottom:2px}
.dtitle{font-size:14px;color:#333}
.dctl{display:flex;align-items:center;gap:19px;margin-right:-1px;color:#777}
.d-min{width:9px;height:1px;background:#555;margin-top:6px}
.d-max{width:9px;height:12px;border:1px solid #555}
.d-x{width:11px;height:11px;stroke:#777}
.dbody{flex:1;display:flex;gap:5px;min-height:0}
.dleft{width:305px;flex:none;display:flex;flex-direction:column}
.dright{width:830px;flex:none;display:flex;flex-direction:column}
.dbtns{height:25px;display:flex;flex:none;margin-bottom:7px}
.gap8{gap:8px;margin-left:1px}
.dbtn{width:98px;height:25px;background:#fff;border:1px solid #d8d8d8;border-radius:3px;display:flex;align-items:center;justify-content:center;white-space:nowrap;flex:none;padding-top:2px}
.dbtn.prim{width:80px;background:#f3f7fd;border-color:#82b4ee}
.dtb{height:26px;flex:none;background:#fff;border:1px solid #dcdcdc;border-radius:4px;display:flex;align-items:center;padding:1px 0 0 4px;gap:6px}
.dtb.tight{gap:8px;padding-left:5px}
.tight .tb{margin-right:3px}
.tbsep{width:1px;height:18px;background:#ddd;margin:0 -1px}
.tb.off{color:#bbb}
.tb.off svg{stroke:#bbb}
.dsearch{height:19px;margin-top:2px;flex:none;background:#fff;border:1px solid #e0e0e0;border-radius:3px;color:#b5b5b5;display:flex;align-items:center;justify-content:space-between;padding:1px 5px 0 2px;font-size:12px}
.dlist{height:260px;margin-top:1px;flex:none;background:#fff;border:1px solid #d6d6d6;position:relative;overflow:hidden}
.dr{height:24px;line-height:24px;padding-left:43px;white-space:nowrap}
.dr.on{background:#c6dcf2;margin:1px 14px 0 40px;height:21px;padding-left:3px;line-height:21px;border-radius:3px}
.sv{position:absolute;right:3px;top:123px;width:8px;height:108px;background:#c8c8c8;border-radius:4px}
.sh{position:absolute;left:14px;top:247px;width:260px;height:8px;background:#c8c8c8;border-radius:4px}
.dprop{height:245px;margin-top:5px;flex:none;background:#fff;border:1px solid #d6d6d6;position:relative;overflow:hidden}
.dp{width:288px}
.sv2{position:absolute;right:3px;top:15px;width:8px;height:127px;background:#c8c8c8;border-radius:4px}
.dsheet{height:471px;margin:8px 0 6px;flex:none;background:#fff;border:1px solid #d6d6d6;border-top:0;position:relative;overflow:hidden}
.ds{width:829px}
.ds td,.ds th{padding:0 3px}
.sh2{position:absolute;left:15px;top:459px;width:654px;height:8px;background:#c8c8c8;border-radius:4px}
.dfoot{height:26px;flex:none;display:flex;gap:5px}
.dfoot .dbtn{width:80px;height:26px}
.fill{flex:1}
.dbtn.ok{background:#2e7fe4;color:#fff;border-color:#2e7fe4}
.hint{margin-top:7px;color:#333;white-space:nowrap;line-height:17px;font-size:12px}
.red{position:absolute;top:28px;height:39px;border:3px solid #f01414;border-radius:2px}
.r1{left:-4px;width:131px}
.r2{left:303px;width:126px;height:42px}
.resize{position:absolute;right:2px;bottom:2px;width:9px;height:9px;stroke:none}
```
